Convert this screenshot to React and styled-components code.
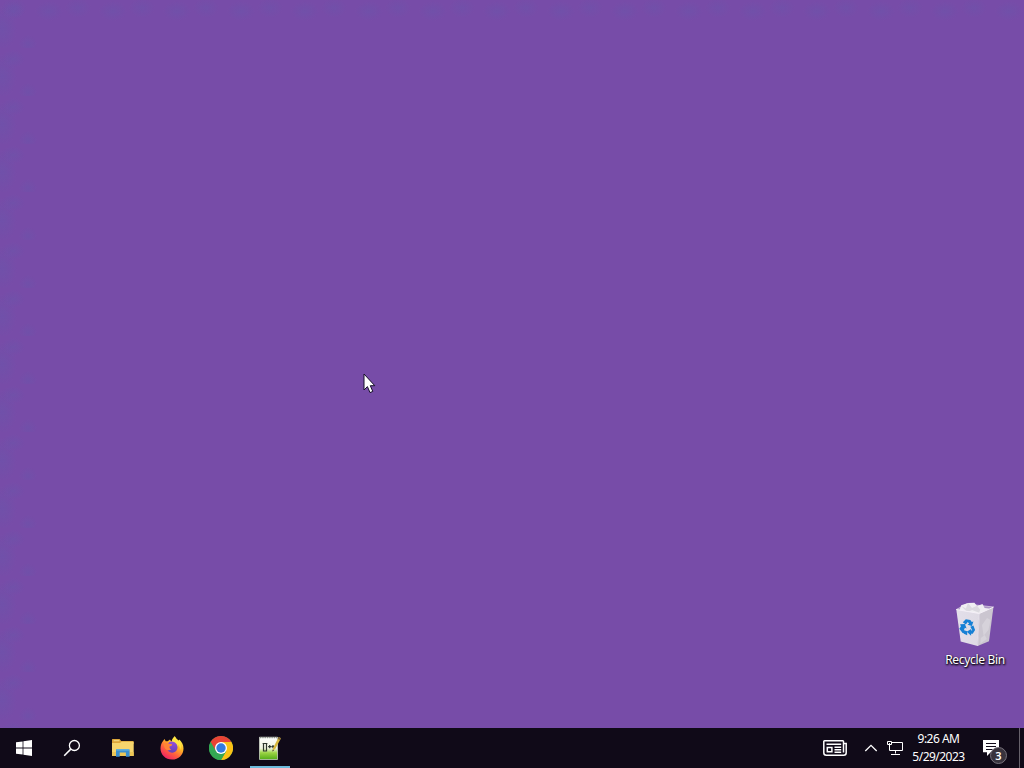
import styled, { createGlobalStyle } from 'styled-components';

const App = () => {
  return (
    <>
      <GlobalStyle />
      <Screen>
        <Desktop>
          <Shortcut>
            <RecycleBinIcon />
            <span>Recycle Bin</span>
          </Shortcut>
          <Pointer width='14' height='21' viewBox='0 0 14 21'>
            <path
              d='M1 1v16l3.4-3.4 2.6 6 2.8-1.2-2.5-5.7h4.5z'
              fill='#fff'
              stroke='#17102a'
              strokeWidth='1'
            />
          </Pointer>
        </Desktop>
        <Taskbar>
          <TaskButton $width={48} aria-label='Start'>
            <StartIcon />
          </TaskButton>
          <TaskButton $width={48} aria-label='Search'>
            <SearchIcon />
          </TaskButton>
          <Apps>
            <TaskButton $width={49} aria-label='File Explorer'>
              <ExplorerIcon />
            </TaskButton>
            <TaskButton $width={49} aria-label='Firefox'>
              <FirefoxIcon />
            </TaskButton>
            <TaskButton $width={49} aria-label='Chrome'>
              <ChromeIcon />
            </TaskButton>
            <TaskButton $width={49} $running aria-label='Notepad++'>
              <NotepadIcon />
            </TaskButton>
          </Apps>
          <Tray>
            <TaskButton $width={48} aria-label='News'>
              <NewsIcon />
            </TaskButton>
            <TaskButton $width={24} aria-label='Show hidden icons'>
              <svg width='14' height='8' viewBox='0 0 14 8'>
                <path d='M1.3 7 7 1.3 12.7 7' fill='none' stroke='#fff' strokeWidth='1.3' />
              </svg>
            </TaskButton>
            <TaskButton $width={24} aria-label='Network'>
              <NetworkIcon />
            </TaskButton>
            <Clock>
              <time>9:26 AM</time>
              <time>5/29/2023</time>
            </Clock>
            <TaskButton $width={48} aria-label='Notifications'>
              <NotificationIcon />
              <Badge>3</Badge>
            </TaskButton>
            <ShowDesktop />
          </Tray>
        </Taskbar>
      </Screen>
    </>
  );
};
export default App;

const StartIcon = () => (
  <svg width='16' height='16' viewBox='0 0 16 16' fill='#fff'>
    <path d='M0 2.3 6.6 1.4v6.2H0zM7.4 1.2 16 0v7.6H7.4zM0 8.4h6.6v6.2L0 13.7zM7.4 8.4H16V16l-8.6-1.2z' />
  </svg>
);

const SearchIcon = () => (
  <svg width='18' height='18' viewBox='0 0 18 18' fill='none' stroke='#fff'>
    <circle cx='11.4' cy='6.5' r='5' strokeWidth='1.3' />
    <path d='M7.8 10.1 1.2 16.7' strokeWidth='1.5' />
  </svg>
);

const ExplorerIcon = () => (
  <svg width='22' height='20' viewBox='0 0 22 20'>
    <path d='M0 1.6Q0 1 .6 1h7l1.6 2H21q.6 0 .6.6V6H0z' fill='#dca63a' />
    <path d='M1.7 2.2h5.6v1H1.7z' fill='#f6df8d' />
    <path d='M0 5h8l1.7-1.3h12V18H0z' fill='#f6d56d' />
    <path d='M0 14h21.6v4H0z' fill='#edc656' />
    <path d='M4 18.7v-6.2q0-1.4 1.4-1.4h10.8q1.4 0 1.4 1.4v6.2h-3.7v-4.2H7.7v4.2z' fill='#398fd0' />
    <path d='M4.4 11.1h12.8v1.5H4.4z' fill='#65b2dd' />
  </svg>
);

const FirefoxIcon = () => (
  <svg width='24' height='24' viewBox='0 0 24 24'>
    <defs>
      <linearGradient id='fox' x1='.8' y1='.1' x2='.25' y2='.95'>
        <stop offset='0' stopColor='#fff34f' />
        <stop offset='.35' stopColor='#ffb326' />
        <stop offset='.65' stopColor='#ff623d' />
        <stop offset='1' stopColor='#ef2364' />
      </linearGradient>
      <linearGradient id='globe' x1='0' y1='0' x2='0' y2='1'>
        <stop offset='0' stopColor='#9550d8' />
        <stop offset='1' stopColor='#6440b8' />
      </linearGradient>
    </defs>
    <path
      d='M2.7 5.4 4.5 3l1.2 2.3 2-.1L10 3.5l1.2 2L14.8.2c.8 2 2.2 3.2 4 4.6l.6-1.3c2.4 2.4 4.1 5.3 4.1 8.9 0 6.4-5 11.2-11.5 11.2S.5 18.8.5 12.6c0-2.7.7-5.2 2.2-7.2z'
      fill='url(#fox)'
    />
    <path d='M14.8.2c-2 1.5-3 3.4-2.8 5.8 2.7.3 5 2 5.3 5 .5-.7.7-1.5.7-2.4 1.5 1.4 2.2 3.2 2 5.4 2-3.4 1.1-7-1.2-9.2-1.8-1.4-3.2-2.6-4-4.6z' fill='#ffe541' />
    <path
      d='M8 7.7c.6-1.4 2-2.2 3.8-2.1 3.5.2 5.9 2.8 5.7 6-.2 3-2.6 5.2-5.5 5.1-2.5-.1-4.5-1.7-4.9-3.9 1.1 1 2.4 1.2 4 .7-1.4-.6-2.1-1.8-1.9-3.1 1.5-.4 2.8-.9 3-2z'
      fill='url(#globe)'
    />
    <path d='M3.5 7.6c1.7-1.4 3.5-1.1 4.9.2l3.6.4c-.2 1.2-1.5 1.6-2.8 2.1 0 1.5.6 2.5 1.8 3.3-2.7 1.4-5.5.3-6.5-2.1-.5-1.2-.9-2.6-1-3.9z' fill='#ff8436' />
  </svg>
);

const ChromeIcon = () => (
  <svg width='24' height='24' viewBox='0 0 24 24'>
    <circle cx='12' cy='12' r='12' fill='#34a853' />
    <path d='M12 12 1.6 6A12 12 0 0 1 22.4 6H12z' fill='#e94335' />
    <path d='M12 6h10.4A12 12 0 0 1 12 24l5.2-9z' fill='#fbc116' />
    <path d='M1.6 6 6.8 15 12 12 12 6z' fill='#e94335' />
    <path d='M1.6 6A12 12 0 0 0 12 24l5.2-9H6.8z' fill='#34a853' />
    <circle cx='12' cy='12' r='6' fill='#fff' />
    <circle cx='12' cy='12' r='4.7' fill='#347be0' />
  </svg>
);

const NotepadIcon = () => (
  <svg width='24' height='24' viewBox='0 0 24 24'>
    <defs>
      <linearGradient id='page' x1='0' y1='0' x2='0' y2='1'>
        <stop offset='0' stopColor='#fff' />
        <stop offset='.5' stopColor='#eef5df' />
        <stop offset='.7' stopColor='#9bd444' />
        <stop offset='1' stopColor='#53ad18' />
      </linearGradient>
    </defs>
    <path d='M1.5 1.2h18v22.3h-18z' fill='url(#page)' stroke='#d9dfd2' strokeWidth='.7' />
    <path d='M2 1.6h17' stroke='#8a918a' strokeWidth='1.2' strokeDasharray='1.3 1' />
    <path
      d='M5.5 15.5v-8M4.6 7.5h4.8M8.5 7.5v8M5.5 15h3M10.1 10.6h3.2M11.7 9v3.2M13.6 10.6h2.9M15 9v3.2'
      fill='none'
      stroke='#2e382e'
      strokeWidth='1.2'
    />
    <path d='m14.3 15.5 1-4L20.8 1l2.2 1.2-5.7 10.6z' fill='#d9b93c' />
    <path d='m20.8 1 2.2 1.2-1.1 1.9-2.2-1.2z' fill='#806934' />
    <path d='m14.3 15.5.5-2 1.2 1z' fill='#333' />
  </svg>
);

const NewsIcon = () => (
  <svg width='24' height='16' viewBox='0 0 24 16' fill='none' stroke='#fff' strokeWidth='1.5'>
    <path d='M20.5 3.5V1.5q0-.7-.7-.7H1.5q-.7 0-.7.7v11.2q0 2.5 2.5 2.5h17.4q2.5 0 2.5-2.5V3.5h-2.7v9' />
    <path d='M3.5 4.2h14.7M11.5 7.3h6.7M11.5 9.8h6.7M11.5 12.3h6.7M4.3 7.4h4.6v4.3H4.3z' />
  </svg>
);

const NetworkIcon = () => (
  <svg width='16' height='14' viewBox='0 0 16 14' fill='none' stroke='#fff' strokeWidth='1'>
    <path d='M5 1.5h10.5v8h-13V5M8.5 9.5v3M4 13.5h9' />
    <path d='M.5.5h4v3h-4zM2.5 2v3' />
  </svg>
);

const NotificationIcon = () => (
  <svg width='16' height='17' viewBox='0 0 16 17'>
    <path d='M0 0h16v12.3H7.7L4 16v-3.7H0z' fill='#fff' />
    <path d='M3 3.5h10M3 6.5h10M3 9.5h6.5' stroke='#130c1b' strokeWidth='1' />
  </svg>
);

const RecycleBinIcon = () => (
  <svg width='48' height='48' viewBox='0 0 48 48'>
    <defs>
      <linearGradient id='side' x1='0' y1='0' x2='1' y2='0'>
        <stop offset='0' stopColor='#e3dfea' />
        <stop offset='1' stopColor='#dedae4' />
      </linearGradient>
    </defs>
    <path d='M5.3 9.5 15.7 4l26.7 3-7.6 7z' fill='#aa93c5' stroke='#d7cbe2' strokeWidth='.8' />
    <path d='m8.2 11 2-5.8L17 3l6.4-.3 2.7 3.2 5.4-2 2.1 4.2 4.3.5-.5 4.8-9.3 1z' fill='#f0eff2' />
    <path d='m10.2 6 4.7 2.5L17 3l4 5 5-2.3 3.3 4 2-5.8-3.2 8.8-7-2.7-4.8 2.3z' fill='#dcdae0' />
    <path d='m5.3 9.5 23 4L26.6 46 9.7 41.5z' fill='url(#side)' />
    <path d='m28.3 13.5 14.1-6.3L38 41.3 26.6 46z' fill='#cbc6d0' />
    <path d='m31 25 5-7 3.6 2-2.2 10-4.8 5.8zM29.8 38l4-3 2 4-6.4 4.4z' fill='#d6d2da' />
    <path d='m5.3 9.5 23 4 14.1-6.3' fill='none' stroke='#f5f0f8' strokeWidth='1' />
    <path d='M28.3 13.5 26.6 46' stroke='#e8e5ec' strokeWidth='.8' />
    <g fill='#1680d5' transform='translate(-.7 .8)'>
      <path d='m12.5 21.5 3-3 4.5.6 1.5 2.2 1.6-.6-1.5 4.6-4.5-1.4 1.7-.9-1.3-1.7-2 2.5z' />
      <path d='m9.8 23.5 4.8-.3 1.7 4.4-1.7-.7-1 2.5 2.2 3.8-3.5-1L9 28l1.6-2.3z' />
      <path d='m20 26 3.1-1.4 1.7 4.6-2.4 3.8h-1.6v2L16.5 31l4.3-2.8v1.4l1.2-.2z' />
      <path d='m13.7 29.5 3.2 1v4l-3.2-1.6z' />
    </g>
  </svg>
);

const GlobalStyle = createGlobalStyle`
  body {
    margin: 0;
    overflow: hidden;
    font-family: 'Noto Sans', 'Open Sans', sans-serif;
  }
`;

const Screen = styled.div`
  display: flex;
  flex-direction: column;
  width: 1024px;
  height: 768px;
`;

const Desktop = styled.main`
  position: relative;
  flex: 1;
  display: flex;
  justify-content: flex-end;
  align-items: flex-end;
  padding: 0 12px 60px;
  background-color: #774ca8;
  /* faint blue mottling along the left and top edges of the wallpaper */
  background-image:
    radial-gradient(ellipse 9px 9px at 28px 44px, #6c53aa99, transparent),
    radial-gradient(ellipse 12px 9px at 13px 11px, #6c53aa99, transparent),
    radial-gradient(ellipse 15px 22px at 2px 28px, #6c53aaaa, transparent),
    radial-gradient(ellipse 14px 10px at 49px 11px, #6c53aa99, transparent),
    radial-gradient(ellipse 13px 10px at 14px 8px, #6c53aa88, transparent);
  background-size: 48px 48px, 48px 48px, 48px 48px, 64px 24px, 64px 24px;
  background-repeat: repeat-y, repeat-y, repeat-y, repeat-x, repeat-x;
`;

const Shortcut = styled.div`
  display: flex;
  flex-direction: column;
  align-items: center;
  width: 74px;
  color: #fff;
  font-size: 12px;
  line-height: 16px;
  letter-spacing: -0.32px;
  white-space: nowrap;
  text-shadow: 1px 1px 2px #000, 0 1px 2px #000;
  svg {
    margin-bottom: 4px;
  }
`;

const Pointer = styled.svg`
  position: absolute;
  left: 363px;
  top: 373px;
`;

const Taskbar = styled.footer`
  display: flex;
  height: 40px;
  background: #100a18;
  color: #fff;
`;

const Apps = styled.div`
  display: flex;
  margin-left: 2px;
`;

const TaskButton = styled.button`
  position: relative;
  display: flex;
  align-items: center;
  justify-content: center;
  width: ${({ $width }) => $width}px;
  height: 40px;
  padding: 0;
  border: none;
  background: ${({ $running }) =>
    $running
      ? 'linear-gradient(#6dbbdc, #6dbbdc) 5px 38px / 40px 2px no-repeat'
      : 'transparent'};
`;

const Tray = styled.div`
  display: flex;
  margin-left: auto;
`;

const Clock = styled.div`
  display: flex;
  flex-direction: column;
  align-items: center;
  width: 60px;
  padding: 2px 0 0 3px;
  box-sizing: border-box;
  font-size: 12px;
  line-height: 18px;
  letter-spacing: -0.52px;
`;

const Badge = styled.span`
  position: absolute;
  left: 23px;
  top: 19px;
  width: 15px;
  height: 15px;
  border: 1px solid #77727c;
  border-radius: 50%;
  background: #38333d;
  color: #fff;
  font-family: 'Noto Sans', sans-serif;
  font-size: 11px;
  font-weight: 600;
  line-height: 15px;
  text-align: center;
`;

const ShowDesktop = styled.div`
  width: 4px;
  margin-left: 4px;
  border-left: 1px solid #66616b;
`;
